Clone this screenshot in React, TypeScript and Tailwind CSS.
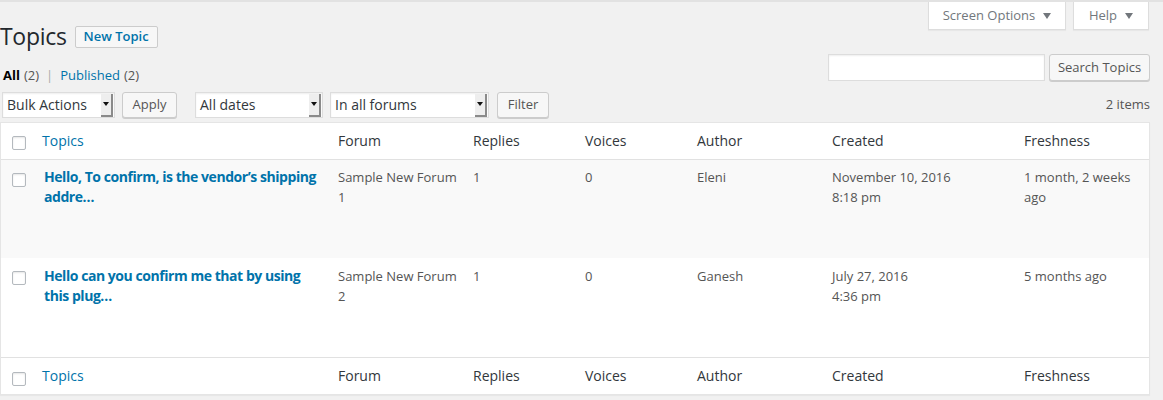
import React from "react";

const font = { fontFamily: '"Open Sans", "Noto Sans", "Liberation Sans", sans-serif' };

const COLS = "grid grid-cols-[31px_296px_135px_112px_112px_135px_192px_135px]";

function Checkbox() {
  return (
    <div className="w-[14px] h-[14px] bg-white border border-[#b4b9be] rounded-[2px] shadow-[inset_0_1px_2px_rgba(0,0,0,0.1)]" />
  );
}

function Select({ label, width }: { label: string; width: string }) {
  return (
    <div className={`${width} h-[26px] bg-white border border-[#dddddd] shadow-[inset_0_1px_2px_rgba(0,0,0,0.07)] flex items-center justify-between pl-[4px] pr-[1px]`}>
      <span className="text-[14px] text-[#32373c] leading-none">{label}</span>
      <div className="w-[12px] h-[23px] bg-[#eeeeee] border-r-2 border-b-2 border-[#8a8a8a] flex items-center justify-center">
        <div className="w-0 h-0 border-l-[3px] border-r-[3px] border-t-[4px] border-l-transparent border-r-transparent border-t-[#111]" />
      </div>
    </div>
  );
}

function Button({ children, className = "" }: { children: React.ReactNode; className?: string }) {
  return (
    <div className={`h-[26px] bg-[#f7f7f7] border border-[#cccccc] rounded-[3px] shadow-[0_1px_0_#cccccc] flex items-center justify-center text-[13px] text-[#555] ${className}`}>
      {children}
    </div>
  );
}

function HeadRow({ top }: { top: boolean }) {
  const cls = `${COLS} h-[37px] ${top ? "border-b" : "border-t"} border-[#e1e1e1] text-[14px] leading-[20px] text-[#32373c]`;
  const pt = "pt-[8px]";
  return (
    <div className={cls}>
      <div className={`pl-[11px] ${top ? "pt-[13px]" : "pt-[14px]"}`}><Checkbox /></div>
      <div className={`pl-[10px] ${pt} text-[#0073aa]`}>Topics</div>
      <div className={`pl-[10px] ${pt}`}>Forum</div>
      <div className={`pl-[10px] ${pt}`}>Replies</div>
      <div className={`pl-[10px] ${pt}`}>Voices</div>
      <div className={`pl-[10px] ${pt}`}>Author</div>
      <div className={`pl-[10px] ${pt}`}>Created</div>
      <div className={`pl-[10px] ${pt}`}>Freshness</div>
    </div>
  );
}

type Row = {
  title: string[];
  forum: string[];
  replies: string;
  voices: string;
  author: string;
  created: string[];
  fresh: string[];
  bg: string;
  h: string;
  pt: string;
};

const rows: Row[] = [
  {
    title: ["Hello, To confirm, is the vendor\u2019s shipping", "addre\u2026"],
    forum: ["Sample New Forum", "1"],
    replies: "1",
    voices: "0",
    author: "Eleni",
    created: ["November 10, 2016", "8:18 pm"],
    fresh: ["1 month, 2 weeks", "ago"],
    bg: "bg-[#f9f9f9]",
    h: "h-[98px]",
    pt: "pt-[7px]",
  },
  {
    title: ["Hello can you confirm me that by using", "this plug\u2026"],
    forum: ["Sample New Forum", "2"],
    replies: "1",
    voices: "0",
    author: "Ganesh",
    created: ["July 27, 2016", "4:36 pm"],
    fresh: ["5 months ago"],
    bg: "bg-white",
    h: "h-[99px]",
    pt: "pt-[8px]",
  },
];

function Lines({ lines }: { lines: string[] }) {
  return (
    <>
      {lines.map((l, i) => (
        <div key={i} className="whitespace-nowrap">{l}</div>
      ))}
    </>
  );
}

function BodyRow({ r }: { r: Row }) {
  return (
    <div className={`${COLS} ${r.h} ${r.bg} text-[13px] leading-[20px] text-[#555]`}>
      <div className="pl-[11px] pt-[13px]"><Checkbox /></div>
      <div className={`pl-[12px] ${r.pt} text-[14px] font-bold tracking-[-0.45px] text-[#0073aa]`}><Lines lines={r.title} /></div>
      <div className={`pl-[10px] ${r.pt}`}><Lines lines={r.forum} /></div>
      <div className={`pl-[10px] ${r.pt}`}>{r.replies}</div>
      <div className={`pl-[10px] ${r.pt}`}>{r.voices}</div>
      <div className={`pl-[10px] ${r.pt}`}>{r.author}</div>
      <div className={`pl-[10px] ${r.pt}`}><Lines lines={r.created} /></div>
      <div className={`pl-[10px] ${r.pt}`}><Lines lines={r.fresh} /></div>
    </div>
  );
}

function Tab({ label, w }: { label: string; w: string }) {
  return (
    <div className={`${w} h-[28px] bg-white border-l border-r border-b border-[#dddddd] shadow-[0_1px_1px_rgba(0,0,0,0.04)] flex items-center justify-center gap-[8px] text-[13px] text-[#72777c]`}>
      <span>{label}</span>
      <span className="w-0 h-0 border-l-[4px] border-r-[4px] border-t-[6px] border-l-transparent border-r-transparent border-t-[#72777c]" />
    </div>
  );
}

export default function App() {
  return (
    <div className="w-[1163px] min-h-[400px] bg-[#f1f1f1] overflow-hidden" style={font}>
      <div className="h-[2px] bg-[#e2e2e2]" />
      <div className="pr-[13px]">
        <div className="h-[90px] flex justify-between items-start">
          <div>
            <div className="mt-[20px] h-[29px] flex items-center">
              <h1 className="text-[23px] leading-[29px] text-[#23282d] font-normal tracking-[-0.3px]">Topics</h1>
              <div className="ml-[8px] h-[22px] px-[8px] border border-[#cccccc] bg-[#f7f7f7] rounded-[2px] flex items-center text-[13px] font-semibold text-[#0073aa]">
                New Topic
              </div>
            </div>
            <div className="mt-[15px] h-[20px] pl-[3px] flex items-center text-[13px] text-[#555]">
              <span className="font-bold text-black">All</span>
              <span className="ml-[4px]">(2)</span>
              <span className="mx-[7px] text-[#aaa]">|</span>
              <span className="text-[#0073aa]">Published</span>
              <span className="ml-[4px]">(2)</span>
            </div>
          </div>
          <div className="flex flex-col items-end">
            <div className="flex gap-[7px] mr-[1px]">
              <Tab label="Screen Options" w="w-[138px]" />
              <Tab label="Help" w="w-[76px]" />
            </div>
            <div className="mt-[24px] flex items-center gap-[4px]">
              <div className="w-[217px] h-[27px] bg-white border border-[#dddddd] shadow-[inset_0_1px_2px_rgba(0,0,0,0.07)]" />
              <Button className="w-[101px] h-[27px]">Search Topics</Button>
            </div>
          </div>
        </div>
        <div className="h-[26px] flex items-center justify-between">
          <div className="flex items-center pl-[2px]">
            <Select label="Bulk Actions" width="w-[113px]" />
            <Button className="ml-[7px] w-[55px]">Apply</Button>
            <div className="ml-[18px]"><Select label="All dates" width="w-[128px]" /></div>
            <div className="ml-[7px]"><Select label="In all forums" width="w-[159px]" /></div>
            <Button className="ml-[8px] w-[52px]">Filter</Button>
          </div>
          <div className="text-[13px] text-[#555]">2 items</div>
        </div>
        <div className="mt-[4px] w-[1150px] bg-white border border-[#e5e5e5] shadow-[0_1px_1px_rgba(0,0,0,0.04)]">
          <HeadRow top />
          {rows.map((r, i) => (
            <BodyRow key={i} r={r} />
          ))}
          <HeadRow top={false} />
        </div>
      </div>
    </div>
  );
}
